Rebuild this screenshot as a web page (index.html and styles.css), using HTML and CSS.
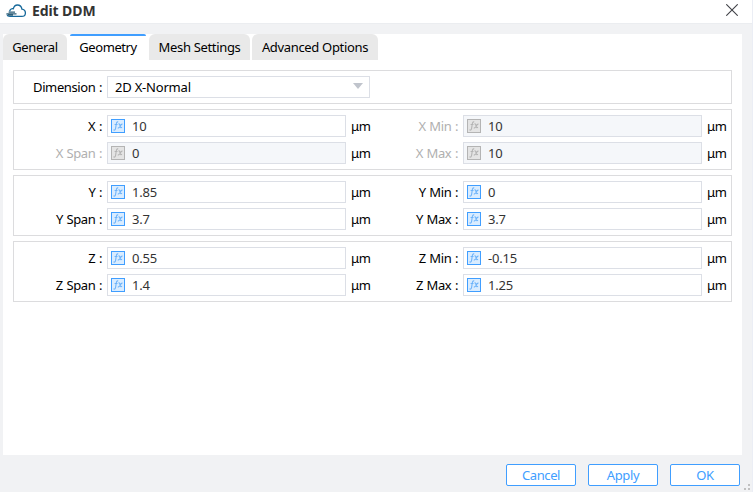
FILE: index.html
```html
<!DOCTYPE html>
<html lang="en">
<head>
<meta charset="utf-8">
<title>Edit DDM</title>
<link rel="stylesheet" href="styles.css">
</head>
<body>
<svg class="defs" width="0" height="0" aria-hidden="true">
  <symbol id="fx" viewBox="0 0 14 14">
    <rect class="fx-box" x=".5" y=".5" width="13" height="13"/>
    <path class="fx-line" d="M7.2 3C5.8 2.4 5.4 4 5.1 6L4.6 9.3C4.4 10.9 3.7 11.5 2.5 10.8M3.6 5.5H6.5M7.5 5C8.7 4.6 8.8 5.8 9.1 7C9.4 8.7 9.9 9 11 8.3M11.5 5.2C10 4.8 9.4 6.8 8.7 8C8.1 8.9 7.5 9.1 6.8 8.7"/>
  </symbol>
</svg>
<div class="dialog">
  <header class="titlebar">
    <svg class="logo" width="20" height="14" viewBox="0 0 20 14">
      <path class="cloud" d="M3.6 7.4C4 5.6 5.5 4.4 7.3 4.8C8 2.3 9.4 1 11.4 1C13.8 1 15.6 2.7 15.9 5.1C18 5.4 19.4 6.9 19.4 8.9C19.4 11 17.9 12.4 15.8 12.4H4C2.4 12.4 1.3 11.8 1 10.7"/>
      <path class="wing" d="M2.6 8.2H9M.4 9.8H10.5M2 11.2H7"/>
    </svg>
    <h1 class="title">Edit DDM</h1>
    <svg class="close" width="12" height="12" viewBox="0 0 12 12"><path d="M.3 .3L11.7 11.7M11.7 .3L.3 11.7"/></svg>
  </header>
  <main class="panel">
    <nav class="tabs">
      <span class="tab general">General</span>
      <span class="tab active">Geometry</span>
      <span class="tab mesh">Mesh Settings</span>
      <span class="tab advanced">Advanced Options</span>
    </nav>
    <div class="groups">
      <section class="group">
        <span class="label">Dimension :</span>
        <span class="select">2D X-Normal<i class="arrow"></i></span>
      </section>
      <section class="group">
        <span class="label">X :</span><span class="field"><svg class="fx"><use href="#fx"/></svg>10</span><span class="unit">μm</span>
        <span class="label off">X Min :</span><span class="field off"><svg class="fx"><use href="#fx"/></svg>10</span><span class="unit">μm</span>
        <span class="label off">X Span :</span><span class="field off"><svg class="fx"><use href="#fx"/></svg>0</span><span class="unit">μm</span>
        <span class="label off">X Max :</span><span class="field off"><svg class="fx"><use href="#fx"/></svg>10</span><span class="unit">μm</span>
      </section>
      <section class="group">
        <span class="label">Y :</span><span class="field"><svg class="fx"><use href="#fx"/></svg>1.85</span><span class="unit">μm</span>
        <span class="label">Y Min :</span><span class="field"><svg class="fx"><use href="#fx"/></svg>0</span><span class="unit">μm</span>
        <span class="label">Y Span :</span><span class="field"><svg class="fx"><use href="#fx"/></svg>3.7</span><span class="unit">μm</span>
        <span class="label">Y Max :</span><span class="field"><svg class="fx"><use href="#fx"/></svg>3.7</span><span class="unit">μm</span>
      </section>
      <section class="group">
        <span class="label">Z :</span><span class="field"><svg class="fx"><use href="#fx"/></svg>0.55</span><span class="unit">μm</span>
        <span class="label">Z Min :</span><span class="field"><svg class="fx"><use href="#fx"/></svg>-0.15</span><span class="unit">μm</span>
        <span class="label">Z Span :</span><span class="field"><svg class="fx"><use href="#fx"/></svg>1.4</span><span class="unit">μm</span>
        <span class="label">Z Max :</span><span class="field"><svg class="fx"><use href="#fx"/></svg>1.25</span><span class="unit">μm</span>
      </section>
    </div>
  </main>
  <footer class="actions">
    <button class="btn">Cancel</button>
    <button class="btn">Apply</button>
    <button class="btn">OK</button>
  </footer>
  <svg class="grip" width="6" height="6" viewBox="0 0 6 6"><path d="M4 0h2v2H4zM0 4h2v2H0zM4 4h2v2H4z"/></svg>
</div>
</body>
</html>
```
FILE: styles.css
```css
* { box-sizing: border-box; }
body {
  margin: 0;
  font: 13px/20px "Noto Sans", "Open Sans", sans-serif;
  letter-spacing: -0.2px;
  color: #000;
}
.defs { position: absolute; }
.dialog {
  position: relative;
  width: 753px;
  height: 492px;
  background: #f1f2f4;
  border-right: 1px solid #ebeef5;
  overflow: hidden;
}
.titlebar {
  display: flex;
  align-items: center;
  height: 24px;
  padding: 0 14px 2px 6px;
  background: #fff;
  border-bottom: 1px solid #ebedf0;
}
.logo { margin-top: 1px; }
.cloud { fill: none; stroke: #17699b; stroke-width: 1.3; }
.wing { fill: none; stroke: #2f5f78; stroke-width: 1.2; }
.title {
  margin: 0 auto 0 6px;
  font-size: 14px;
  font-weight: 700;
  line-height: 20px;
  letter-spacing: -0.1px;
  color: #333;
}
.close { fill: none; stroke: #404247; stroke-width: 1.1; margin-top: -1px; }
.panel {
  width: 739px;
  height: 421px;
  margin: 10px 0 0 3px;
  background: #fff;
}
.tabs { display: flex; height: 26px; letter-spacing: -0.33px; }
.tab {
  height: 26px;
  padding-top: 3px;
  text-align: center;
  background: #e9e9e9;
  border-radius: 6px 6px 0 0;
}
.general { width: 64px; }
.active {
  width: 76px;
  margin: 0 3px;
  padding-top: 1px;
  background: #fff;
  border-top: 2px solid #409eff;
  border-radius: 2px 2px 0 0;
  letter-spacing: -0.4px;
}
.mesh { width: 101px; margin-right: 2px; }
.advanced { width: 126px; }
.groups {
  display: flex;
  flex-direction: column;
  gap: 5px;
  padding: 10px 10px 0;
}
.group {
  display: grid;
  grid-template-columns: 88px 239px 25px 77px 239px auto;
  grid-auto-rows: 22px;
  column-gap: 5px;
  row-gap: 5px;
  padding: 5px 0;
  border: 1px solid #dcdcde;
}
.label {
  padding-top: 1px;
  text-align: right;
  white-space: nowrap;
  letter-spacing: -0.4px;
  word-spacing: 0.6px;
}
.label.off { color: #b0b0b0; }
.unit { padding-top: 1px; letter-spacing: -0.5px; }
.field, .select {
  display: flex;
  align-items: center;
  border: 1px solid #dcdfe6;
  background: #fff;
}
.field {
  --fx-edge: #409eff;
  --fx-fill: #d9ecff;
  --fx-ink: #6db3fa;
  padding-left: 3px;
  gap: 7px;
  color: #333;
}
.field.off {
  --fx-edge: #b4b4b4;
  --fx-fill: #e4e4e4;
  --fx-ink: #b4b4b4;
  background: #f5f7fa;
}
.fx { width: 14px; height: 14px; }
.fx-box { fill: var(--fx-fill); stroke: var(--fx-edge); }
.fx-line { fill: none; stroke: var(--fx-ink); stroke-width: 1.1; }
.select {
  grid-column: 2 / 4;
  width: 263px;
  justify-content: space-between;
  padding: 0 6px 0 7px;
}
.arrow {
  border: 5px solid transparent;
  border-top: 6px solid #c0c4cc;
  border-bottom: 0;
  margin-top: -2px;
}
.actions {
  display: flex;
  justify-content: flex-end;
  gap: 12px;
  padding: 9px 12px 0 0;
}
.btn {
  width: 70px;
  height: 22px;
  padding: 0;
  font: inherit;
  letter-spacing: -0.4px;
  color: #409eff;
  background: #fff;
  border: 1px solid #409eff;
  border-radius: 2px;
}
.grip { position: absolute; right: 2px; bottom: 2px; fill: #c0c0c0; }
```
